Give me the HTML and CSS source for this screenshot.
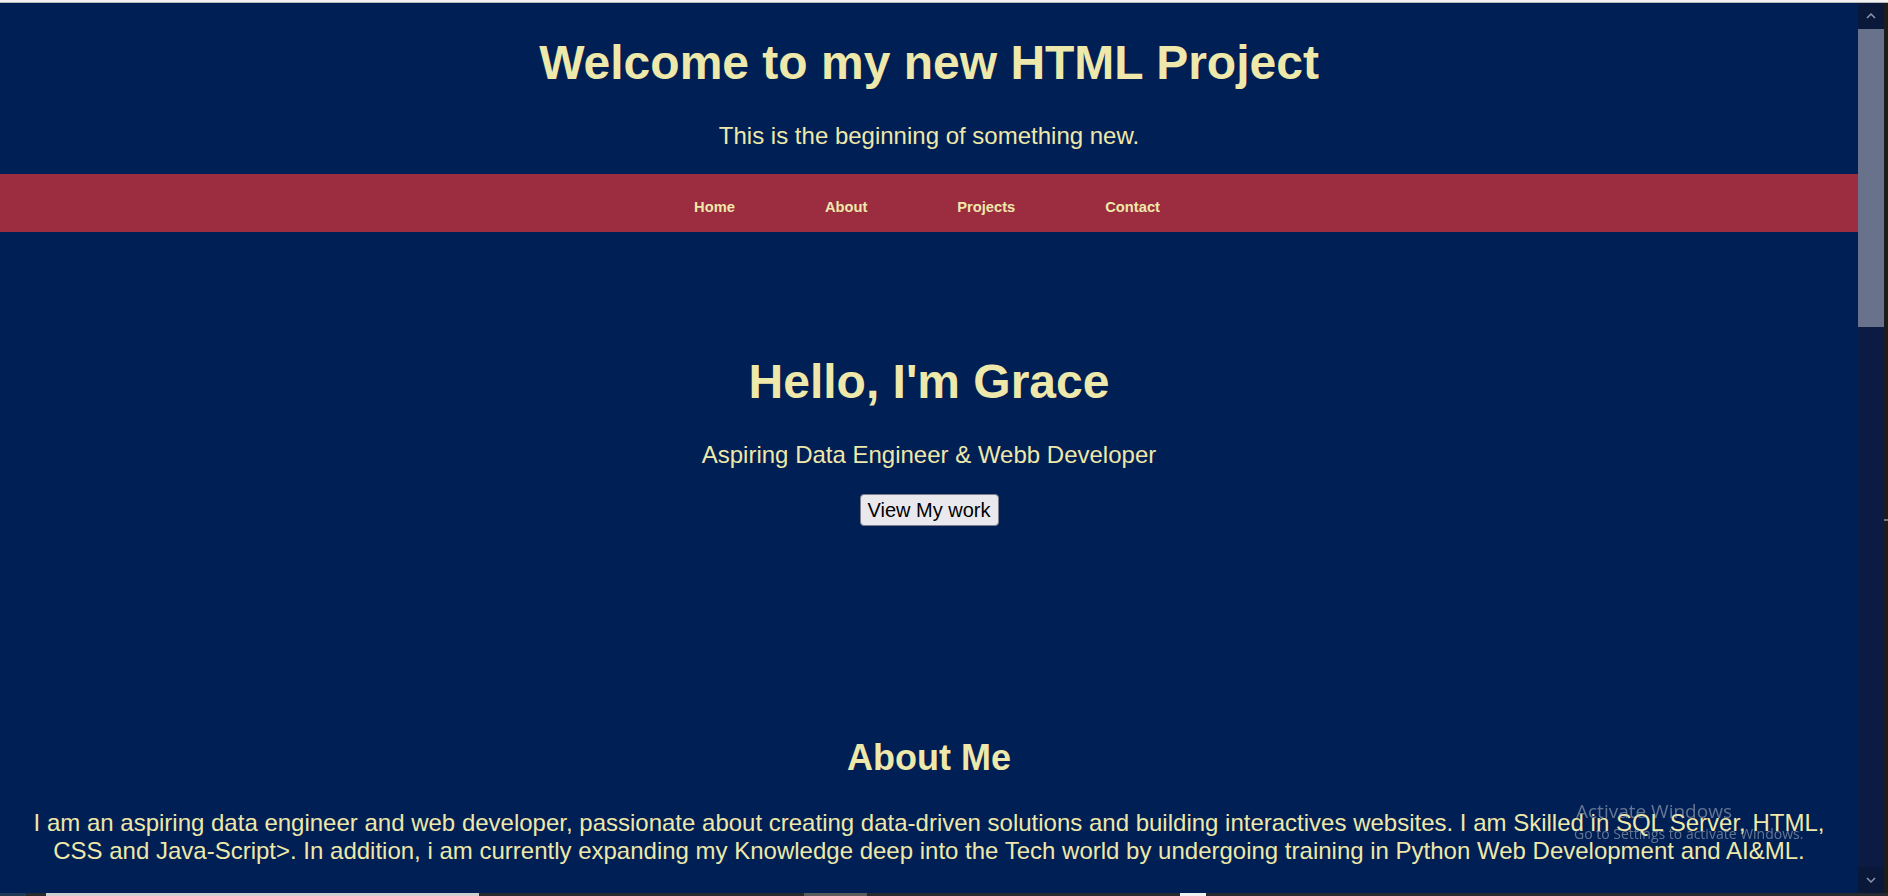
FILE: index.html
```html
<!DOCTYPE html>
<html lang="en">
<head>
<meta charset="utf-8">
<title>My HTML Project</title>
<link rel="stylesheet" href="styles.css">
</head>
<body>
<div class="topline"></div>
<div class="window">
  <div class="page">
    <header class="site-header">
      <h1>Welcome to my new HTML Project</h1>
      <p>This is the beginning of something new.</p>
    </header>
    <nav class="site-nav">
      <ul>
        <li><a href="#home">Home</a></li>
        <li><a href="#about">About</a></li>
        <li><a href="#projects">Projects</a></li>
        <li><a href="#contact">Contact</a></li>
      </ul>
    </nav>
    <section class="hero" id="home">
      <h2>Hello, I'm Grace</h2>
      <p>Aspiring Data Engineer &amp; Webb Developer</p>
      <div class="hero-actions"><button class="btn" type="button">View My work</button></div>
    </section>
    <section class="about" id="about">
      <h2>About Me</h2>
      <p>I am an aspiring data engineer and web developer, passionate about creating data-driven solutions and building interactives websites. I am Skilled in SQL Server, HTML, CSS and Java-Script&gt;. In addition, i am currently expanding my Knowledge deep into the Tech world by undergoing training in Python Web Development and AI&amp;ML.</p>
    </section>
  </div>
  <div class="scrollbar">
    <div class="sb-track">
      <div class="sb-btn"><svg width="10" height="8" viewBox="0 0 10 8"><polyline points="1,6 5,2 9,6" fill="none" stroke="#8f97ab" stroke-width="1.5"/></svg></div>
      <div class="sb-thumb"></div>
      <div class="sb-space"></div>
      <div class="sb-btn"><svg width="10" height="8" viewBox="0 0 10 8"><polyline points="1,2 5,6 9,2" fill="none" stroke="#8f97ab" stroke-width="1.5"/></svg></div>
    </div>
    <div class="sb-edge"><div class="sb-mark"></div></div>
  </div>
</div>
<div class="bottomline"></div>
<div class="watermark">
  <div class="wm-title">Activate Windows</div>
  <div class="wm-sub">Go to Settings to activate Windows.</div>
</div>
</body>
</html>
```
FILE: styles.css
```css
html, body {
  margin: 0;
  height: 100%;
  overflow: hidden;
}

body {
  display: flex;
  flex-direction: column;
  background: #001f54;
  color: #eee8aa;
  font-family: "Liberation Sans", Arial, sans-serif;
}

.topline {
  flex: none;
  height: 3px;
  background: linear-gradient(#f2f2f2 0 2px, #b9b9b9 2px);
}

.window {
  flex: 1;
  display: flex;
  min-height: 0;
}

.page {
  flex: 1;
  min-width: 0;
  overflow: hidden;
}

/* header */
.site-header {
  text-align: center;
  padding: 32px 0 24px;
}

.site-header h1 {
  margin: 0;
  font-size: 48px;
  line-height: 55px;
  font-weight: 700;
}

.site-header p {
  margin: 32px 0 0;
  font-size: 24px;
  line-height: 28px;
}

/* nav */
.site-nav {
  background: #9c2c3f;
  height: 58px;
  box-sizing: border-box;
  padding-top: 25px;
}

.site-nav ul {
  list-style: none;
  margin: 0;
  padding: 0 4px 0 0;
  display: flex;
  justify-content: center;
  gap: 90px;
}

.site-nav a {
  color: #eee8aa;
  text-decoration: none;
  font-weight: 700;
  font-size: 14.7px;
  line-height: 17px;
  display: block;
}

/* hero */
.hero {
  text-align: center;
  padding: 90px 0;
}

.hero h2 {
  margin: 32px 0 0;
  font-size: 48px;
  line-height: 55px;
  font-weight: 700;
}

.hero p {
  margin: 32px 0 0;
  font-size: 24px;
  line-height: 28px;
}

.hero-actions {
  display: flex;
  justify-content: center;
  margin-top: 25px;
}

.btn {
  font-family: "Liberation Sans", Arial, sans-serif;
  font-size: 20px;
  line-height: 24px;
  padding: 3px 7px;
  border: 1px solid #7d7f8c;
  border-radius: 4px;
  background: #e9e9ed;
  color: #000;
}

/* about */
.about {
  text-align: center;
  padding: 90px 20px 40px;
}

.about h2 {
  margin: 31px 0 0;
  font-size: 36px;
  line-height: 41px;
  font-weight: 700;
}

.about p {
  margin: 31px 0 0;
  font-size: 24px;
  line-height: 28px;
}

/* fake window scrollbar */
.scrollbar {
  flex: none;
  width: 30px;
  display: flex;
}

.sb-track {
  width: 26px;
  display: flex;
  flex-direction: column;
  background: #0b1b44;
}

.sb-btn {
  height: 26px;
  display: flex;
  align-items: center;
  justify-content: center;
  background: #0a1839;
}

.sb-thumb {
  height: 298px;
  background: #69728b;
}

.sb-space {
  flex: 1;
}

.sb-edge {
  width: 4px;
  background: #1c1c1c;
  padding-top: 516px;
  box-sizing: border-box;
}

.sb-mark {
  height: 2px;
  background: #777;
}

.bottomline {
  flex: none;
  height: 3px;
  background: linear-gradient(to right,
    #1f3a55 0 26px,
    #262a30 26px 46px,
    #cfcfcf 46px 479px,
    #262a30 479px 804px,
    #5b5b5b 804px 867px,
    #262a30 867px 1180px,
    #f0f0f0 1180px 1206px,
    #262a30 1206px);
}

/* OS watermark overlay */
.watermark {
  position: fixed;
  left: 1574px;
  top: 799px;
  font-family: "Open Sans", "Noto Sans", sans-serif;
  color: rgba(200, 202, 210, 0.5);
  pointer-events: none;
}

.wm-title {
  font-size: 19px;
  line-height: 25px;
  padding-left: 2px;
}

.wm-sub {
  font-size: 14px;
  line-height: 18px;
  margin-top: 1px;
}
```
